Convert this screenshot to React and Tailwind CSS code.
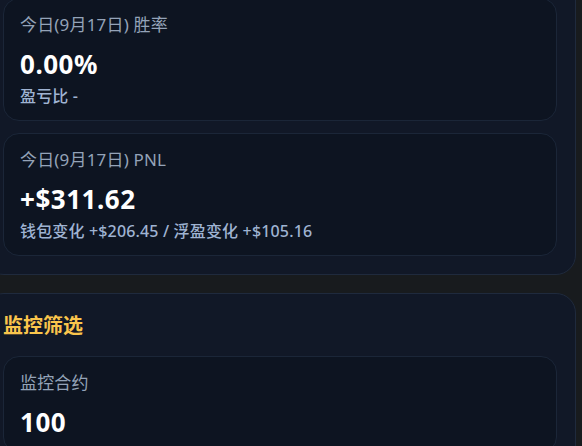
import React from "react";

const font = { fontFamily: '"Noto Sans", "Noto Sans CJK SC", sans-serif' };

function StatCard({ label, value, sub }) {
  return (
    <div className="rounded-2xl border border-[#1b2638] bg-[#0d1421] px-4 pt-4 pb-[14px]">
      <div className="text-[17px] leading-5 tracking-[0.01em] text-[#94a3b8]">{label}</div>
      <div className="mt-[13px] text-[26px] font-bold leading-8 tracking-[0.02em] text-white">{value}</div>
      {sub && (
        <div className="mt-[6px] text-[16px] font-medium leading-5 tracking-[0.01em] text-[#9fb3d2]">{sub}</div>
      )}
    </div>
  );
}

export default function App() {
  return (
    <div className="min-h-screen overflow-hidden bg-[#181b1e]" style={font}>
      <div className="ml-[-16px] mt-[-21px] flex w-[592px] flex-col gap-[18px]">
        {/* today stats */}
        <section className="rounded-[20px] border border-[#1f2a3d] bg-[#111827] p-[18px]">
          <div className="flex flex-col gap-3">
            <StatCard label="今日(9月17日) 胜率" value="0.00%" sub="盈亏比 -" />
            <StatCard
              label="今日(9月17日) PNL"
              value="+$311.62"
              sub="钱包变化 +$206.45 / 浮盈变化 +$105.16"
            />
          </div>
        </section>

        {/* monitor filter */}
        <section className="rounded-[20px] border border-[#1f2a3d] bg-[#111827] p-[18px]">
          <h3 className="mb-4 text-[20px] font-bold leading-7 text-[#fac54c]">监控筛选</h3>
          <div className="flex flex-col gap-3">
            <StatCard label="监控合约" value="100" />
          </div>
        </section>
      </div>
    </div>
  );
}
